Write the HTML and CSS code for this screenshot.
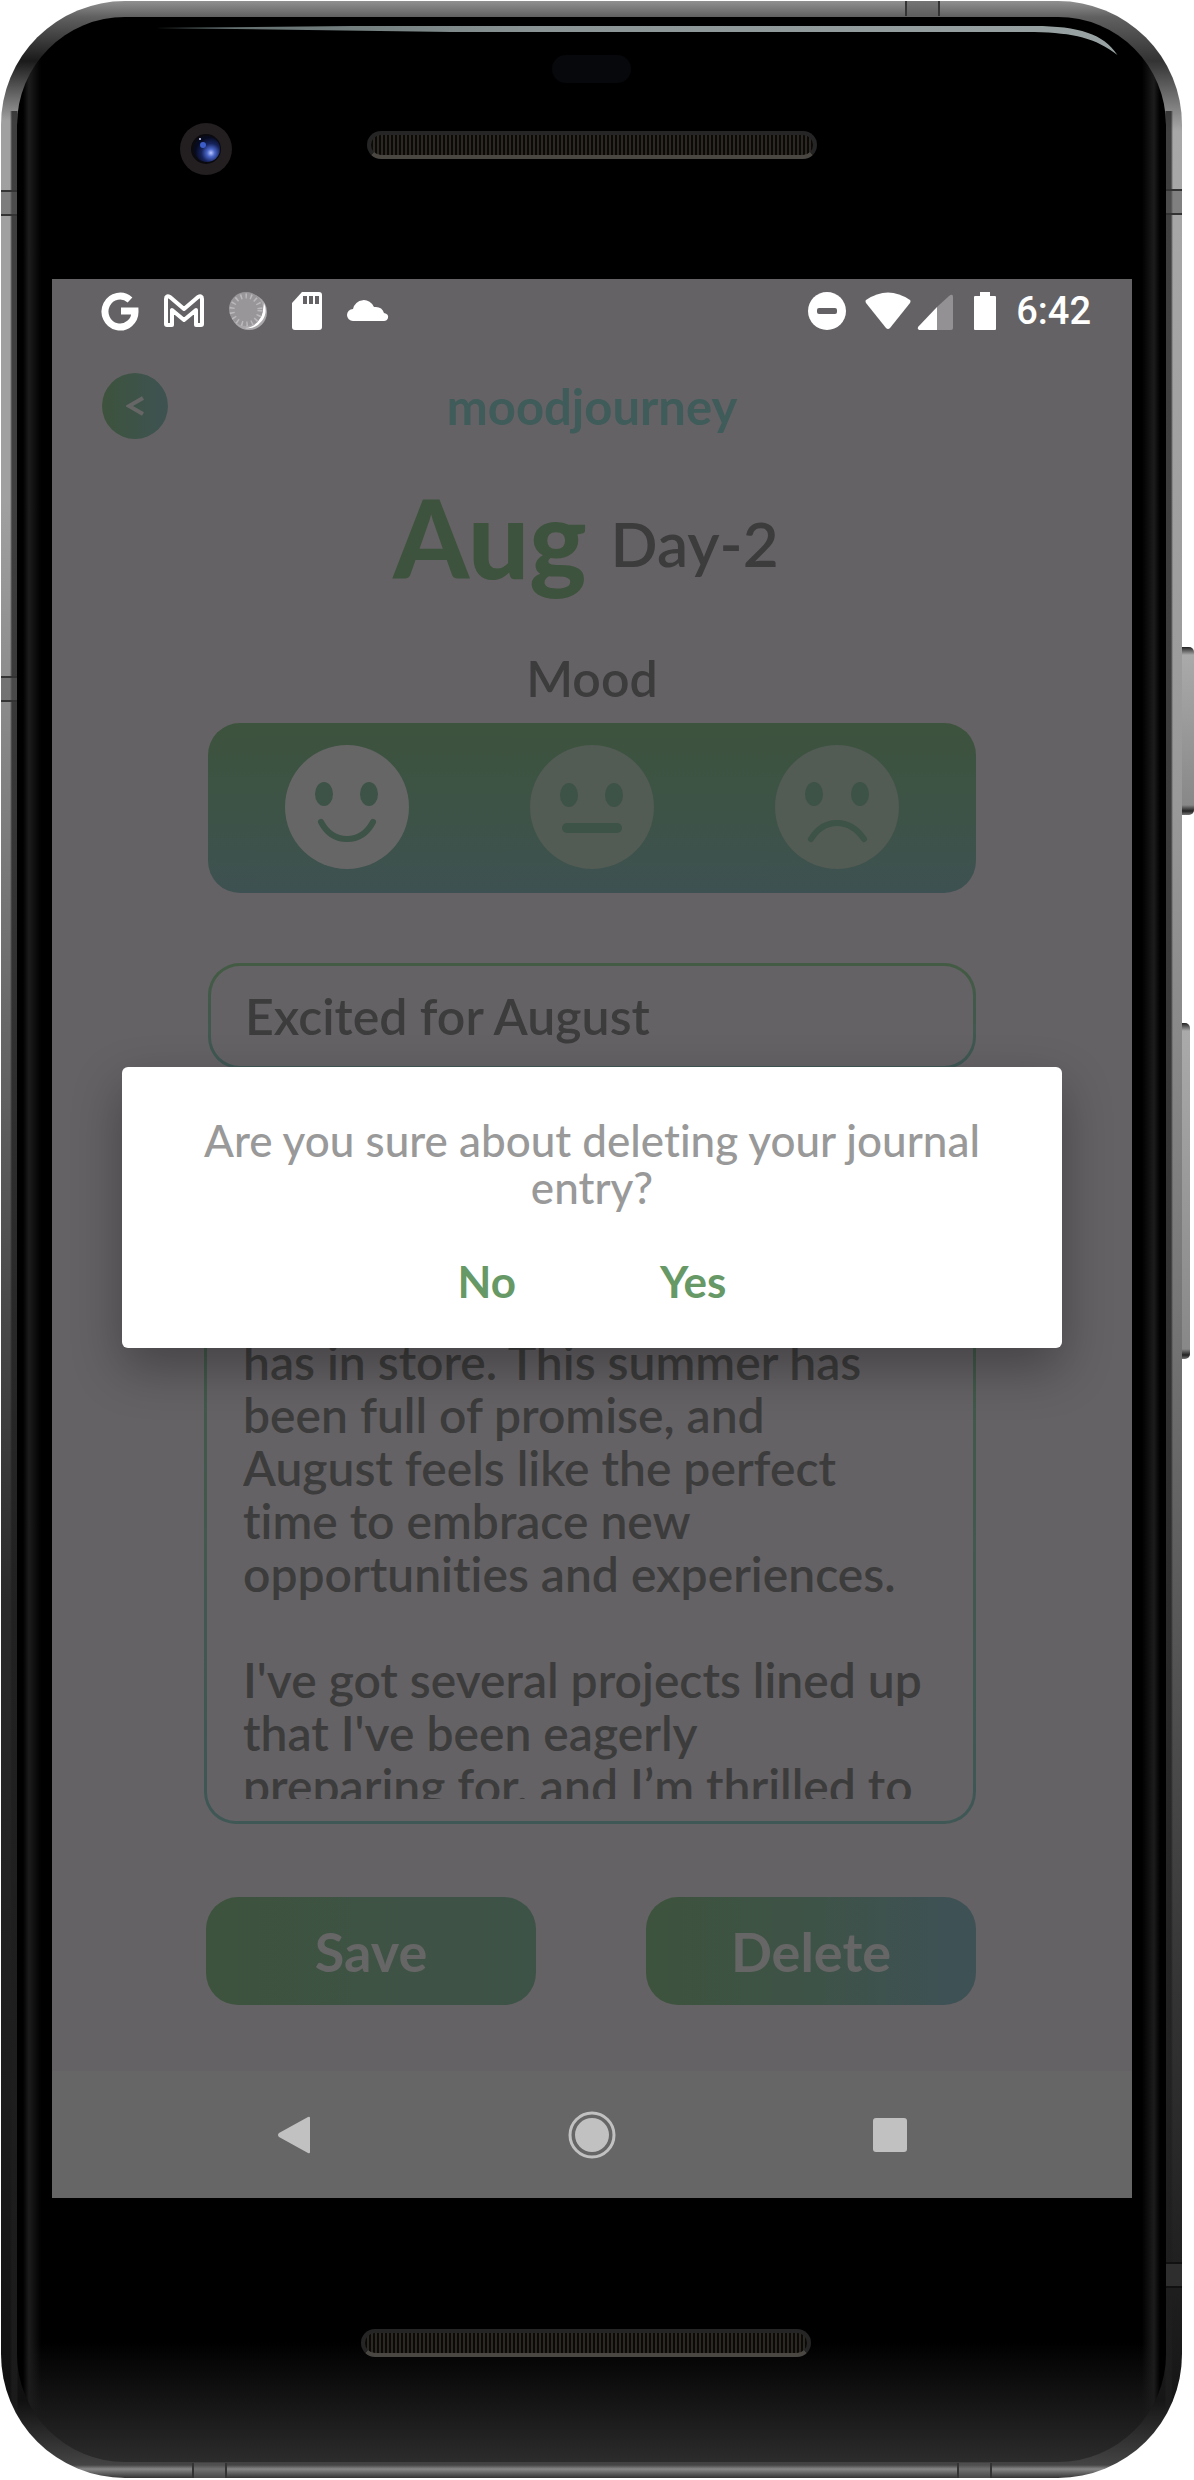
FILE: index.html
```html
<!DOCTYPE html>
<html lang="en">
<head>
<meta charset="utf-8">
<meta name="viewport" content="width=device-width, initial-scale=1">
<title>moodjourney</title>
<link rel="stylesheet" href="styles.css">
</head>
<body>
<div class="phone">
  <span class="key key-power"></span>
  <span class="key key-volume"></span>
  <span class="seam seam-left-top"></span>
  <span class="seam seam-left-mid"></span>
  <span class="seam seam-right-top"></span>
  <span class="seam seam-right-bottom"></span>
  <span class="seam-h seam-top"></span>
  <span class="seam-h seam-bottom-left"></span>
  <span class="seam-h seam-bottom-right"></span>
  <div class="glass">
    <svg class="shine" viewBox="0 0 1000 40" preserveAspectRatio="none" aria-hidden="true"><defs><linearGradient id="sh"><stop offset="0" stop-color="#5a6666"/><stop offset=".4" stop-color="#8a9494"/><stop offset="1" stop-color="#98a2a2"/></linearGradient></defs><path fill="url(#sh)" d="M0 2L200 0H890C935 0 960 8 974 29C952 12 930 7 890 6H300Z"/></svg>
    <div class="bezel bezel-top">
      <span class="sensor"></span>
      <svg class="camera" viewBox="0 0 52 52" aria-hidden="true"><defs><radialGradient id="lens" cx=".65" cy=".65" r=".6"><stop offset="0" stop-color="#b9c6ff"/><stop offset=".25" stop-color="#4a66c8"/><stop offset=".6" stop-color="#16235c"/><stop offset="1" stop-color="#070b20"/></radialGradient></defs><circle cx="26" cy="26" r="26" fill="#231f20"/><circle cx="26" cy="26" r="15" fill="#0a0a0f"/><circle cx="27" cy="26" r="13" fill="url(#lens)"/><circle cx="23" cy="22" r="3" fill="#3c5cc8"/><circle cx="20" cy="16" r="1" fill="#cdd8ff"/></svg>
      <span class="speaker"></span>
    </div>

    <main class="screen">
      <header class="status">
        <div class="status-group status-left">
          <svg width="38" height="40" viewBox="0 0 38 40" aria-hidden="true"><path d="M29 9A15 15.500 0 1 0 34 20H20" fill="none" stroke="#fff" stroke-width="7"/></svg>
          <svg width="42" height="40" viewBox="0 0 42 40" aria-hidden="true"><path d="M3 33V8Q3 4 7 6L21 18L35 6Q39 4 39 8V33Q39 34 38 34H33V19L21 29L9 19V34H4Q3 34 3 33Z" fill="none" stroke="#fff" stroke-width="4" stroke-linejoin="round"/></svg>
          <svg width="38" height="40" viewBox="0 0 38 40" aria-hidden="true"><circle cx="20" cy="21" r="18" fill="#aaa8aa"/><path d="M35 12A18 18 0 0 1 16 37Q33 36 35 12Z" fill="#fff"/><circle cx="17" cy="18" r="17" fill="#999699"/><circle cx="17" cy="19" r="14" fill="none" stroke="#bbb9bb" stroke-width="5" stroke-dasharray="1.500 3.500"/></svg>
          <svg width="32" height="40" viewBox="0 0 32 40" aria-hidden="true"><path fill="#fff" d="M11 1H28Q31 1 31 4V36Q31 39 28 39H4Q1 39 1 36V12Z"/><path fill="#656265" d="M12 5h4v8h-4zM18 5h4v8h-4zM24 5h4v8h-4z"/></svg>
          <svg width="42" height="40" viewBox="0 0 42 40" aria-hidden="true"><path fill="#fff" d="M6 30A6 6 0 0 1 6 18A11 11 0 0 1 27 16Q35 15 37 22Q42 23 41 27Q40 30 37 30Z"/></svg>
        </div>
        <div class="status-group status-right">
          <svg width="38" height="40" viewBox="0 0 38 40" aria-hidden="true"><circle cx="19" cy="20" r="19" fill="#fff"/><rect x="9" y="17" width="20" height="6" rx="2" fill="#656265"/></svg>
          <svg class="wifi" width="46" height="40" viewBox="0 0 46 40" aria-hidden="true"><path fill="#fff" d="M1 9Q23-6 45 9Q46 10 45 12L25 37Q23 39 21 37L1 12Q0 10 1 9Z"/></svg>
          <svg class="signal" width="36" height="40" viewBox="0 0 36 40" aria-hidden="true"><path fill="#949194" d="M32 5Q36 2 36 6V37Q36 39 34 39H20V16Z"/><path fill="#fff" d="M20 16V39H2Q0 38 1 36Z"/></svg>
          <svg class="battery" width="22" height="40" viewBox="0 0 22 40" aria-hidden="true"><path fill="#fff" d="M6 1H16V5H21Q22 5 22 6V38Q22 39 21 39H1Q0 39 0 38V6Q0 5 1 5H6Z"/></svg>
          <time class="clock">6:42</time>
        </div>
      </header>

      <div class="topbar">
        <button class="back" aria-label="Back"><svg width="18" height="20" viewBox="0 0 18 20" aria-hidden="true"><path d="M17 2L3 10L17 18" fill="none" stroke="#666" stroke-width="4"/></svg></button>
        <div class="brand">moodjourney</div>
      </div>

      <h1 class="date"><span class="month">Aug</span> <span class="day">Day-2</span></h1>

      <h2 class="mood-title">Mood</h2>
      <div class="moods">
        <button class="mood" aria-label="Happy"><svg viewBox="0 0 124 124" aria-hidden="true"><circle cx="62" cy="62" r="62" fill="#666"/><g fill="#3d5347"><ellipse cx="39" cy="49" rx="9" ry="12"/><ellipse cx="84" cy="49" rx="9" ry="12"/></g><path d="M36 77Q45 94 62 94T88 77" fill="none" stroke="#3d5347" stroke-width="6" stroke-linecap="round"/></svg></button>
        <button class="mood" aria-label="Neutral"><svg viewBox="0 0 124 124" aria-hidden="true"><circle cx="62" cy="62" r="62" fill="#525b54"/><g fill="#3d5347"><ellipse cx="39" cy="50" rx="9" ry="12"/><ellipse cx="84" cy="50" rx="9" ry="12"/><rect x="32" y="78" width="60" height="10" rx="5"/></g></svg></button>
        <button class="mood" aria-label="Sad"><svg viewBox="0 0 124 124" aria-hidden="true"><circle cx="62" cy="62" r="62" fill="#525b54"/><g fill="#3d5347"><ellipse cx="39" cy="49" rx="9" ry="12"/><ellipse cx="85" cy="49" rx="9" ry="12"/></g><path d="M36 94Q46 78 62 78T89 94" fill="none" stroke="#3d5347" stroke-width="6" stroke-linecap="round"/></svg></button>
      </div>

      <input class="field title-field" type="text" aria-label="Entry title" value="Excited for August">
      <div class="field entry-field">
<textarea class="entry" aria-label="Journal entry">




has in store. This summer has
been full of promise, and
August feels like the perfect
time to embrace new
opportunities and experiences.

I've got several projects lined up
that I've been eagerly
preparing for, and I’m thrilled to</textarea>
      </div>

      <div class="actions">
        <button class="action save">Save</button>
        <button class="action delete">Delete</button>
      </div>

      <nav class="navbar" aria-label="System">
        <button class="nav-key" aria-label="Back"><svg width="36" height="40" viewBox="0 0 36 40" aria-hidden="true"><path fill="#c1c1c1" d="M32 2Q34 1 34 3V37Q34 39 32 38L3 22Q1 20 3 18Z"/></svg></button>
        <button class="nav-key" aria-label="Home"><svg width="50" height="50" viewBox="0 0 50 50" aria-hidden="true"><circle cx="25" cy="25" r="22" fill="none" stroke="#c1c1c1" stroke-width="3"/><circle cx="25" cy="25" r="17" fill="#c1c1c1"/></svg></button>
        <button class="nav-key" aria-label="Overview"><svg width="34" height="34" viewBox="0 0 34 34" aria-hidden="true"><rect width="34" height="34" rx="3" fill="#c1c1c1"/></svg></button>
      </nav>

      <div class="modal-layer">
        <section class="modal" role="alertdialog" aria-labelledby="ask">
          <p class="ask" id="ask">Are you sure about deleting your journal entry?</p>
          <div class="choices">
            <button class="choice">No</button>
            <button class="choice">Yes</button>
          </div>
        </section>
      </div>
    </main>

    <div class="bezel bezel-bottom"><span class="speaker"></span></div>
  </div>
</div>
</body>
</html>
```
FILE: styles.css
```css
:root {
  --page: #656265;
  --ink: #3c3c3c;
  --green: #3d533d;
  --teal: #3f5c5a;
}

* { box-sizing: border-box; }

body {
  margin: 0;
  padding: 1px 12px 1px 1px;
  background: #fff;
  font-family: Lato, sans-serif;
  font-variant-ligatures: none;
  color: var(--ink);
}

button {
  padding: 0;
  border: 0;
  background: none;
  font: inherit;
  color: inherit;
  cursor: pointer;
}

svg { display: block; }

/* Device shell */
.phone {
  position: relative;
  padding: 16px;
  border-radius: 124px;
  background:
    linear-gradient(90deg, transparent 9px, rgb(30 30 30 / 75%) 11px 16px, transparent 17px, transparent calc(100% - 17px), rgb(30 30 30 / 75%) calc(100% - 16px) calc(100% - 11px), transparent calc(100% - 9px)) 0 110px no-repeat,
    linear-gradient(180deg, #909090 0, #606060 16px, #1a1a1a 60px, #a0a0a0 120px, #a0a0a0 500px, #6a6a6a 1000px, #2a2a2a 1600px, #1c1c1c 2100px, #101010 2400px, #444 2464px, #888 2468px, #333 100%) 0 0 / 51% 100% no-repeat,
    linear-gradient(180deg, #909090 0, #606060 16px, #333 60px, #a8a8a8 130px, #999 800px, #777 1300px, #333 2000px, #161616 2400px, #444 2464px, #888 2468px, #333 100%) 100% 0 / 50% 100% no-repeat;
}

.glass {
  position: relative;
  overflow: hidden;
  padding: 0 34px 0 35px;
  border-radius: 108px;
  background: linear-gradient(90deg, #000 6px, #1c1c1c 12px, transparent 24px, transparent calc(100% - 24px), #1c1c1c calc(100% - 12px), #000 calc(100% - 6px)),
    linear-gradient(0deg, #2c2c2c 0, #181818 50px, #000 120px);
  background-color: #000;
}

.shine {
  position: absolute;
  top: 9px;
  left: 12%;
  width: 86%;
  height: 40px;
}

.key {
  position: absolute;
  left: 100%;
  border-radius: 0 5px 5px 0;
  background: linear-gradient(180deg, #222 0, #aaa 8px, #888 calc(100% - 10px), #222 calc(100% - 4px), #777 100%);
}
.key-power { top: 646px; width: 12px; height: 168px; }
.key-volume { top: 1022px; width: 8px; height: 336px; }

.seam {
  position: absolute;
  width: 16px;
  height: 26px;
  border: solid #333;
  border-width: 2px 0;
  background: rgb(90 90 90 / 50%);
}
.seam-left-top { left: 0; top: 189px; }
.seam-left-mid { left: 0; top: 675px; }
.seam-right-top { right: 0; top: 188px; }
.seam-right-bottom { right: 0; bottom: 190px; border-color: #111; background: #2e2e2e; }

.seam-h {
  position: absolute;
  width: 35px;
  height: 15px;
  border: solid #333;
  border-width: 0 2px;
  background: rgb(90 90 90 / 50%);
}
.seam-top { top: 0; right: 242px; }
.seam-bottom-left { bottom: 0; left: 191px; }
.seam-bottom-right { bottom: 0; right: 190px; }

.bezel {
  position: relative;
  display: flex;
  justify-content: center;
}
.bezel-top { height: 262px; padding-top: 114px; }
.bezel-bottom { height: 264px; padding: 131px 12px 0 0; }

.speaker {
  width: 450px;
  height: 28px;
  border: 4px solid #252525;
  border-bottom-color: #4a4642;
  border-radius: 14px;
  background: repeating-linear-gradient(90deg, #0b0a09 0 2px, #2c2923 2px 4px);
}

.sensor {
  position: absolute;
  top: 38px;
  left: 50%;
  width: 79px;
  height: 28px;
  margin-left: -40px;
  border-radius: 14px;
  background: #07080c;
}

.camera {
  position: absolute;
  top: 106px;
  left: 128px;
  width: 52px;
  height: 52px;
}

/* App screen */
.screen {
  position: relative;
  display: flex;
  flex-direction: column;
  background: var(--page);
}

.status {
  display: flex;
  justify-content: space-between;
  padding: 12px 41px 0 49px;
}
.status-group { display: flex; align-items: center; height: 40px; }
.status-left { gap: 24px; }
.wifi { margin-left: 19px; }
.signal { margin-left: 6px; }
.battery { margin-left: 21px; }
.clock {
  margin-left: 20px;
  font: 500 38px/40px Roboto, sans-serif;
  color: #fff;
}

.topbar {
  display: grid;
  grid-template-columns: 66px 1fr 66px;
  align-items: center;
  margin-top: 42px;
  padding: 0 50px;
}
.back {
  display: grid;
  place-items: center;
  width: 66px;
  height: 66px;
  border-radius: 50%;
  background: linear-gradient(90deg, var(--green), #3e5350 90%);
}
.brand {
  text-align: center;
  font-size: 49px;
  line-height: 64px;
  font-weight: 700;
  color: var(--teal);
}

.date {
  display: flex;
  justify-content: center;
  align-items: center;
  gap: 24px;
  margin: 20px 12px 0 0;
  line-height: 144px;
}
.month { font-size: 108px; font-weight: 900; color: var(--green); }
.day { padding-top: 12px; font-size: 62px; font-weight: 600; }

.mood-title {
  margin: 31px 0 0;
  text-align: center;
  font-size: 50px;
  line-height: 64px;
  font-weight: 600;
}

.moods {
  display: flex;
  justify-content: space-between;
  margin: 13px 156px 0;
  padding: 22px 77px 24px;
  border-radius: 32px;
  background: linear-gradient(180deg, var(--green), #3d5347 55%, #3e5152);
}
.mood svg { width: 124px; height: 124px; }

.field {
  border: 3px solid transparent;
  border-radius: 32px;
  background: linear-gradient(var(--page), var(--page)) padding-box,
    linear-gradient(180deg, #435b43, #3f5755) border-box;
  color: var(--ink);
}
.title-field {
  height: 106px;
  margin: 70px 156px 0;
  padding: 0 34px;
  font: 600 50px/64px Lato, sans-serif;
}
.entry-field {
  margin: 42px 156px 0 152px;
  padding: 9px 10px 22px 36px;
}
.entry {
  display: block;
  width: 100%;
  height: 676px;
  padding: 0;
  border: 0;
  overflow: hidden;
  resize: none;
  background: none;
  font: 600 48px/53px Lato, sans-serif;
  font-variant-ligatures: none;
  white-space: pre;
  color: inherit;
}

.actions {
  display: grid;
  grid-template-columns: 1fr 1fr;
  gap: 110px;
  margin: 73px 156px 66px 154px;
}
.action {
  height: 108px;
  border-radius: 32px;
  font-size: 54px;
  font-weight: 700;
  color: #666;
}
.save { background: linear-gradient(90deg, var(--green), #3e5345 60%, #3e5347); }
.delete { background: linear-gradient(90deg, var(--green), #3e5347 50%, #3e5154 90%); }

.navbar {
  display: flex;
  justify-content: space-between;
  align-items: center;
  height: 127px;
  padding: 0 217px;
  background: #666;
}
.nav-key { display: grid; place-items: center; width: 50px; height: 50px; }

.modal-layer {
  position: absolute;
  inset: 0;
  display: flex;
  align-items: flex-start;
  padding: 788px 70px 0;
}
.modal {
  flex: 1;
  padding: 50px 78px 35px;
  border-radius: 6px;
  background: #fff;
  box-shadow: 0 20px 50px rgb(0 0 0 / 32%);
}
.ask {
  margin: 0;
  text-align: center;
  font-size: 44px;
  line-height: 47px;
  font-weight: 500;
  color: #999;
}
.choices {
  display: flex;
  justify-content: center;
  gap: 144px;
  margin-top: 38px;
}
.choice {
  font-size: 44px;
  line-height: 64px;
  font-weight: 700;
  color: #669966;
}
```
